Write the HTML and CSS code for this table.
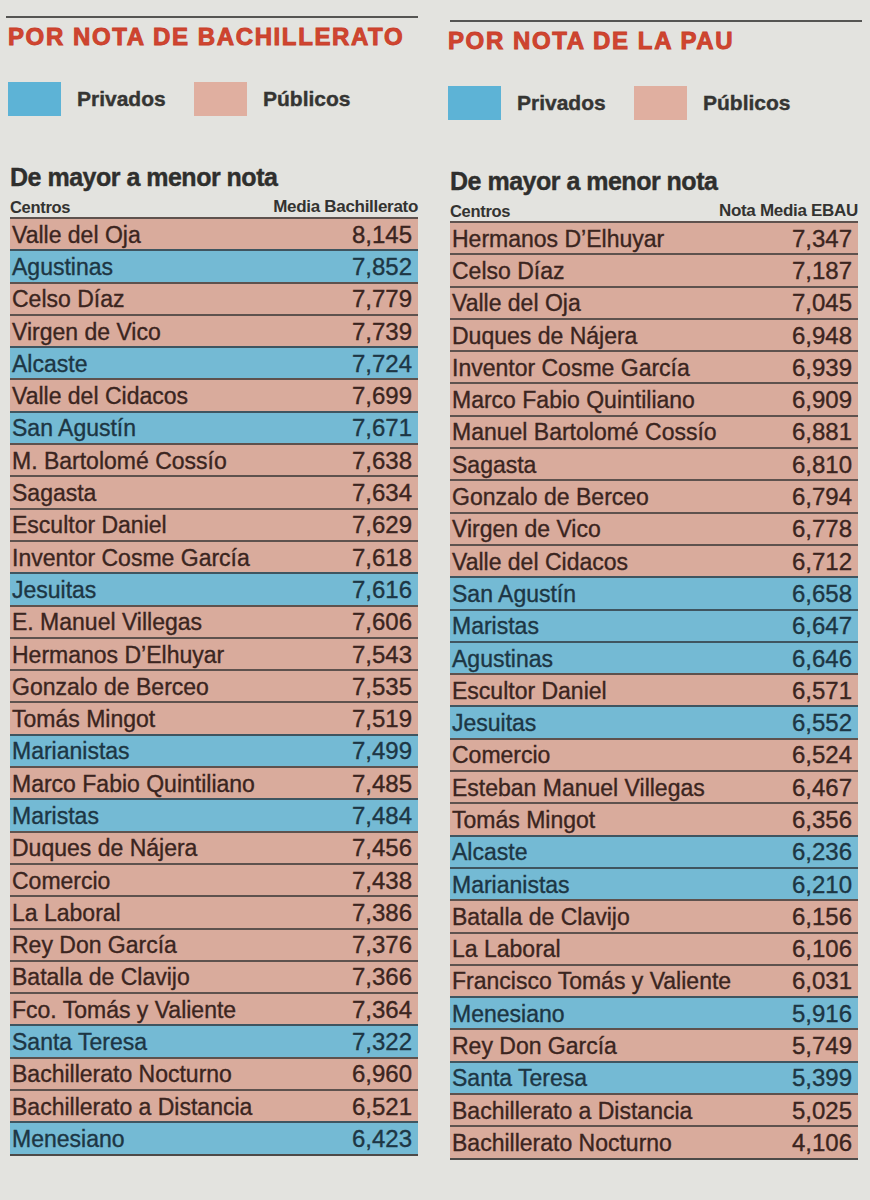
FILE: index.html
```html
<!DOCTYPE html>
<html lang="es">
<head>
<meta charset="utf-8">
<title>Notas Bachillerato y PAU</title>
<link rel="stylesheet" href="styles.css">
</head>
<body>
<div class="page">
  <section class="col">
    <div class="rule"></div>
    <h2 class="title">POR NOTA DE BACHILLERATO</h2>
    <div class="legend">
      <span class="sw sw-pri"></span><span class="lg-label">Privados</span>
      <span class="sw sw-pub"></span><span class="lg-label">Públicos</span>
    </div>
    <h3 class="sub">De mayor a menor nota</h3>
    <div class="thead"><span>Centros</span><span>Media Bachillerato</span></div>
    <div class="rows">
      <div class="row pub"><span>Valle del Oja</span><span>8,145</span></div>
      <div class="row pri"><span>Agustinas</span><span>7,852</span></div>
      <div class="row pub"><span>Celso Díaz</span><span>7,779</span></div>
      <div class="row pub"><span>Virgen de Vico</span><span>7,739</span></div>
      <div class="row pri"><span>Alcaste</span><span>7,724</span></div>
      <div class="row pub"><span>Valle del Cidacos</span><span>7,699</span></div>
      <div class="row pri"><span>San Agustín</span><span>7,671</span></div>
      <div class="row pub"><span>M. Bartolomé Cossío</span><span>7,638</span></div>
      <div class="row pub"><span>Sagasta</span><span>7,634</span></div>
      <div class="row pub"><span>Escultor Daniel</span><span>7,629</span></div>
      <div class="row pub"><span>Inventor Cosme García</span><span>7,618</span></div>
      <div class="row pri"><span>Jesuitas</span><span>7,616</span></div>
      <div class="row pub"><span>E. Manuel Villegas</span><span>7,606</span></div>
      <div class="row pub"><span>Hermanos D’Elhuyar</span><span>7,543</span></div>
      <div class="row pub"><span>Gonzalo de Berceo</span><span>7,535</span></div>
      <div class="row pub"><span>Tomás Mingot</span><span>7,519</span></div>
      <div class="row pri"><span>Marianistas</span><span>7,499</span></div>
      <div class="row pub"><span>Marco Fabio Quintiliano</span><span>7,485</span></div>
      <div class="row pri"><span>Maristas</span><span>7,484</span></div>
      <div class="row pub"><span>Duques de Nájera</span><span>7,456</span></div>
      <div class="row pub"><span>Comercio</span><span>7,438</span></div>
      <div class="row pub"><span>La Laboral</span><span>7,386</span></div>
      <div class="row pub"><span>Rey Don García</span><span>7,376</span></div>
      <div class="row pub"><span>Batalla de Clavijo</span><span>7,366</span></div>
      <div class="row pub"><span>Fco. Tomás y Valiente</span><span>7,364</span></div>
      <div class="row pri"><span>Santa Teresa</span><span>7,322</span></div>
      <div class="row pub"><span>Bachillerato Nocturno</span><span>6,960</span></div>
      <div class="row pub"><span>Bachillerato a Distancia</span><span>6,521</span></div>
      <div class="row pri"><span>Menesiano</span><span>6,423</span></div>
    </div>
  </section>
  <section class="col col-right">
    <div class="rule"></div>
    <h2 class="title">POR NOTA DE LA PAU</h2>
    <div class="legend">
      <span class="sw sw-pri"></span><span class="lg-label">Privados</span>
      <span class="sw sw-pub"></span><span class="lg-label">Públicos</span>
    </div>
    <h3 class="sub">De mayor a menor nota</h3>
    <div class="thead"><span>Centros</span><span>Nota Media EBAU</span></div>
    <div class="rows">
      <div class="row pub"><span>Hermanos D’Elhuyar</span><span>7,347</span></div>
      <div class="row pub"><span>Celso Díaz</span><span>7,187</span></div>
      <div class="row pub"><span>Valle del Oja</span><span>7,045</span></div>
      <div class="row pub"><span>Duques de Nájera</span><span>6,948</span></div>
      <div class="row pub"><span>Inventor Cosme García</span><span>6,939</span></div>
      <div class="row pub"><span>Marco Fabio Quintiliano</span><span>6,909</span></div>
      <div class="row pub"><span>Manuel Bartolomé Cossío</span><span>6,881</span></div>
      <div class="row pub"><span>Sagasta</span><span>6,810</span></div>
      <div class="row pub"><span>Gonzalo de Berceo</span><span>6,794</span></div>
      <div class="row pub"><span>Virgen de Vico</span><span>6,778</span></div>
      <div class="row pub"><span>Valle del Cidacos</span><span>6,712</span></div>
      <div class="row pri"><span>San Agustín</span><span>6,658</span></div>
      <div class="row pri"><span>Maristas</span><span>6,647</span></div>
      <div class="row pri"><span>Agustinas</span><span>6,646</span></div>
      <div class="row pub"><span>Escultor Daniel</span><span>6,571</span></div>
      <div class="row pri"><span>Jesuitas</span><span>6,552</span></div>
      <div class="row pub"><span>Comercio</span><span>6,524</span></div>
      <div class="row pub"><span>Esteban Manuel Villegas</span><span>6,467</span></div>
      <div class="row pub"><span>Tomás Mingot</span><span>6,356</span></div>
      <div class="row pri"><span>Alcaste</span><span>6,236</span></div>
      <div class="row pri"><span>Marianistas</span><span>6,210</span></div>
      <div class="row pub"><span>Batalla de Clavijo</span><span>6,156</span></div>
      <div class="row pub"><span>La Laboral</span><span>6,106</span></div>
      <div class="row pub"><span>Francisco Tomás y Valiente</span><span>6,031</span></div>
      <div class="row pri"><span>Menesiano</span><span>5,916</span></div>
      <div class="row pub"><span>Rey Don García</span><span>5,749</span></div>
      <div class="row pri"><span>Santa Teresa</span><span>5,399</span></div>
      <div class="row pub"><span>Bachillerato a Distancia</span><span>5,025</span></div>
      <div class="row pub"><span>Bachillerato Nocturno</span><span>4,106</span></div>
    </div>
  </section>
</div>
</body>
</html>
```
FILE: styles.css
```css
html, body {
  margin: 0;
  padding: 0;
}
body {
  background: #e3e3df;
  font-family: "Liberation Sans", Arial, sans-serif;
  color: #3a2a25;
  width: 870px;
  min-height: 1200px;
}
.page {
  display: flex;
  gap: 32px;
  padding: 16px 8px 0 10px;
}
.col {
  width: 408px;
  display: flex;
  flex-direction: column;
}
.col-right {
  padding-top: 4px;
}
.rule {
  height: 2px;
  background: #555553;
  margin-left: -4px;
}
.col-right .rule {
  margin-left: 0;
  margin-right: -4px;
}
.title {
  margin: 5px 0 0 -2px;
  font-family: "Liberation Sans", Arial, sans-serif;
  font-weight: bold;
  font-size: 24px;
  line-height: 28px;
  color: #d04530;
  letter-spacing: 1.6px;
  -webkit-text-stroke: 0.9px #c83f2a;
  white-space: nowrap;
}
.legend {
  margin-top: 31px;
  display: flex;
  align-items: center;
  height: 34px;
}
.sw {
  width: 53px;
  height: 34px;
  margin-left: -2px;
}
.sw-pri {
  background: #5db3d6;
}
.sw-pub {
  background: #e0afa0;
  margin-left: 0;
}
.lg-label {
  font-weight: bold;
  font-size: 21px;
  color: #353533;
  margin-left: 16px;
  width: 117px;
  -webkit-text-stroke: 0.4px #353533;
}
.sub {
  margin: 47px 0 0 0;
  font-weight: bold;
  font-size: 25px;
  line-height: 28px;
  letter-spacing: -0.5px;
  color: #2f2f2d;
  -webkit-text-stroke: 0.4px #2f2f2d;
}
.thead {
  margin-top: 6px;
  display: flex;
  justify-content: space-between;
  font-weight: bold;
  font-size: 17px;
  line-height: 20px;
  color: #333331;
  letter-spacing: -0.3px;
}
.thead span:first-child {
  font-size: 16.5px;
}
.rows {
  display: flex;
  flex-direction: column;
  border-bottom: 2px solid #4d4a48;
}
.row {
  box-sizing: border-box;
  height: 32.3px;
  border-top: 2px solid #5e524e;
  display: flex;
  justify-content: space-between;
  align-items: center;
  padding: 1px 6px 0 2px;
  font-size: 23px;
  line-height: 28px;
  -webkit-text-stroke: 0.35px currentColor;
}
.row span:last-child {
  font-size: 24px;
}
.pub {
  background: #d9ab9c;
  color: #3b2520;
}
.pri {
  background: #74bad4;
  color: #1d3644;
  border-top-color: #3f5560;
}
```
